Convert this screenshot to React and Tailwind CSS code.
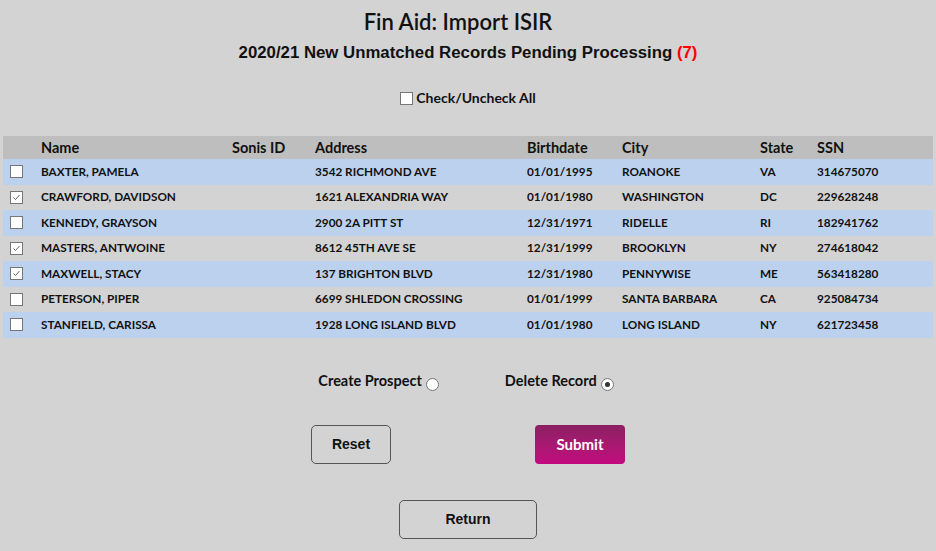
import React from "react";

const rows = [
  ["BAXTER, PAMELA", "", "3542 RICHMOND AVE", "01/01/1995", "ROANOKE", "VA", "314675070", false],
  ["CRAWFORD, DAVIDSON", "", "1621 ALEXANDRIA WAY", "01/01/1980", "WASHINGTON", "DC", "229628248", true],
  ["KENNEDY, GRAYSON", "", "2900 2A PITT ST", "12/31/1971", "RIDELLE", "RI", "182941762", false],
  ["MASTERS, ANTWOINE", "", "8612 45TH AVE SE", "12/31/1999", "BROOKLYN", "NY", "274618042", true],
  ["MAXWELL, STACY", "", "137 BRIGHTON BLVD", "12/31/1980", "PENNYWISE", "ME", "563418280", true],
  ["PETERSON, PIPER", "", "6699 SHLEDON CROSSING", "01/01/1999", "SANTA BARBARA", "CA", "925084734", false],
  ["STANFIELD, CARISSA", "", "1928 LONG ISLAND BLVD", "01/01/1980", "LONG ISLAND", "NY", "621723458", false],
];

function Box({ checked }) {
  return (
    <span className="inline-flex w-[13px] h-[13px] bg-white border border-[#767676] items-center justify-center align-middle">
      {checked && (
        <svg width="9" height="9" viewBox="0 0 9 9">
          <path d="M1.5 4.5 L3.5 6.5 L7.5 2" fill="none" stroke="#555" strokeWidth="0.9" />
        </svg>
      )}
    </span>
  );
}

function Radio({ checked }) {
  return (
    <span className="inline-flex w-[13px] h-[13px] rounded-full bg-white border border-[#767676] items-center justify-center">
      {checked && <span className="w-[5px] h-[5px] rounded-full bg-[#333]" />}
    </span>
  );
}

export default function App() {
  const geo = { fontFamily: "Lato, 'Noto Sans', sans-serif" };
  const arial = { fontFamily: "'Liberation Sans', Arial, sans-serif" };
  return (
    <div className="w-[936px] h-[551px] bg-[#d3d3d3] overflow-hidden flex flex-col items-center text-[#111]" style={geo}>
      <h1 className="mt-[8px] mr-[20px] h-[28px] leading-[28px] text-[22px] font-semibold">Fin Aid: Import ISIR</h1>
      <h2 className="mt-[3px] h-[28px] leading-[28px] text-[16.8px] font-bold" style={arial}>
        2020/21 New Unmatched Records Pending Processing <span className="text-[#ff0000]">(7)</span>
      </h2>
      <div className="mt-[20px] h-[20px] flex items-center gap-[3px] text-[14px] font-bold">
        <span className="mt-[2px] flex"><Box /></span>
        <span>Check/Uncheck All</span>
      </div>
      <table className="mt-[29px] w-[930px] table-fixed border-collapse self-start ml-[3px]">
        <colgroup>
          <col className="w-[38px]" />
          <col className="w-[191px]" />
          <col className="w-[83px]" />
          <col className="w-[212px]" />
          <col className="w-[95px]" />
          <col className="w-[138px]" />
          <col className="w-[57px]" />
          <col className="w-[116px]" />
        </colgroup>
        <thead>
          <tr className="bg-[#bebebe] h-[23px] text-left text-[14.5px] font-bold">
            <th></th>
            <th className="font-bold">Name</th>
            <th className="font-bold">Sonis ID</th>
            <th className="font-bold">Address</th>
            <th className="font-bold">Birthdate</th>
            <th className="font-bold">City</th>
            <th className="font-bold">State</th>
            <th className="font-bold">SSN</th>
          </tr>
        </thead>
        <tbody>
          {rows.map((r, i) => (
            <tr key={i} className={(i % 2 === 0 ? "bg-[#bcd1ee]" : "bg-[#d3d3d3]") + " h-[25.5px] text-[11.75px] font-bold"}>
              <td className="pl-[7px]"><span className="flex"><Box checked={r[7]} /></span></td>
              {r.slice(0, 7).map((c, j) => (
                <td key={j} className="whitespace-nowrap">{c}</td>
              ))}
            </tr>
          ))}
        </tbody>
      </table>
      <div className="mt-[34px] mr-[4px] flex items-end text-[14.5px] font-bold h-[20px]">
        <span>Create Prospect</span>
        <span className="ml-[4px] mb-[1px] flex"><Radio /></span>
        <span className="ml-[66px]">Delete Record</span>
        <span className="ml-[4px] mb-[1px] flex"><Radio checked /></span>
      </div>
      <div className="mt-[33px] flex gap-[144px]">
        <button className="w-[80px] h-[39px] rounded-[5px] border border-[#555] text-[14px] font-bold" style={arial}>Reset</button>
        <button className="w-[90px] h-[39px] rounded-[4px] text-white text-[15px] font-bold bg-gradient-to-b from-[#8b1f63] to-[#c4087f]">Submit</button>
      </div>
      <button className="mt-[36px] w-[138px] h-[39px] rounded-[5px] border border-[#555] text-[14px] font-bold" style={arial}>Return</button>
    </div>
  );
}
